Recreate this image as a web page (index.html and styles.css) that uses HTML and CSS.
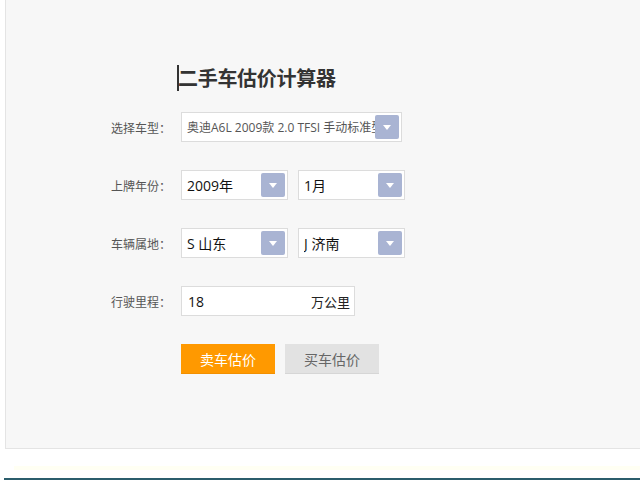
FILE: index.html
```html
<!DOCTYPE html>
<html lang="zh-CN">
<head>
<meta charset="utf-8">
<title>二手车估价计算器</title>
<link rel="stylesheet" href="styles.css">
</head>
<body>
<div class="panel">
  <h1 class="title">二手车估价计算器</h1>
  <div class="form">
    <div class="row">
      <label class="label">选择车型：</label>
      <div class="select wide small"><span class="val">奥迪A6L 2009款 2.0 TFSI 手动标准型</span><span class="arrow"></span></div>
    </div>
    <div class="row">
      <label class="label">上牌年份：</label>
      <div class="select"><span class="val">2009年</span><span class="arrow"></span></div>
      <div class="select"><span class="val">1月</span><span class="arrow"></span></div>
    </div>
    <div class="row">
      <label class="label">车辆属地：</label>
      <div class="select"><span class="val">S 山东</span><span class="arrow"></span></div>
      <div class="select"><span class="val">J 济南</span><span class="arrow"></span></div>
    </div>
    <div class="row">
      <label class="label">行驶里程：</label>
      <div class="input"><span class="val">18</span><span class="unit">万公里</span></div>
    </div>
    <div class="row btns">
      <button class="btn sell">卖车估价</button>
      <button class="btn buy">买车估价</button>
    </div>
  </div>
</div>
<div class="tint"></div>
<div class="footer-line"></div>
</body>
</html>
```
FILE: styles.css
```css
html, body {
  margin: 0;
  padding: 0;
  background: #ffffff;
  font-family: "Open Sans", "Noto Sans CJK SC", sans-serif;
}
.panel {
  margin-left: 5px;
  height: 449px;
  box-sizing: border-box;
  background: #f7f7f7;
  border-left: 1px solid #e4e4e4;
  border-bottom: 1px solid #e4e4e4;
  padding-top: 65px;
}
.title {
  margin: 0 0 0 171px;
  font-family: "Noto Sans CJK SC", sans-serif;
  font-size: 20px;
  font-weight: 700;
  line-height: 26px;
  color: #333;
  border-left: 2px solid #333;
  width: fit-content;
  height: 26px;
  text-indent: -1px;
  letter-spacing: -0.3px;
}
.form {
  margin-top: 21px;
  display: flex;
  flex-direction: column;
  gap: 28px;
}
.row {
  display: flex;
  align-items: center;
  height: 30px;
  gap: 10px;
}
.label {
  width: 66px;
  margin-left: 99px;
  text-align: right;
  font-family: "Noto Sans CJK SC", sans-serif;
  font-size: 12px;
  color: #555;
  white-space: nowrap;
}
.select, .input {
  box-sizing: border-box;
  height: 30px;
  background: #fff;
  border: 1px solid #dcdcdc;
  display: flex;
  align-items: center;
  padding: 0 2px 0 5px;
  font-size: 14px;
  color: #111;
  overflow: hidden;
  white-space: nowrap;
}
.select {
  width: 107px;
}
.select.wide {
  width: 221px;
}
.select.small .val {
  font-size: 12px;
  color: #555;
}
.val {
  flex: 1;
  overflow: hidden;
}
.arrow {
  flex: none;
  width: 24px;
  height: 24px;
  border-radius: 2px;
  background: #a9b4d3;
  position: relative;
}
.arrow::after {
  content: "";
  position: absolute;
  left: 8px;
  top: 10px;
  border-left: 4px solid transparent;
  border-right: 4px solid transparent;
  border-top: 5px solid #fff;
}
.input {
  width: 174px;
  padding: 0 4px 0 6px;
}
.unit {
  font-size: 13px;
  color: #222;
}
.btns {
  padding-left: 175px;
}
.btn {
  width: 94px;
  height: 30px;
  border: 0;
  padding: 0;
  font-family: "Noto Sans CJK SC", sans-serif;
  font-size: 14px;
  cursor: pointer;
}
.sell {
  background: #ff9900;
  color: #fff;
  border-bottom: 1px solid #f29000;
}
.buy {
  background: #e2e2e2;
  color: #666;
  border-bottom: 1px solid #d6d6d6;
}
.tint {
  margin-top: 17px;
  margin-left: 14px;
  height: 4px;
  background: #fffff3;
}
.footer-line {
  margin-top: 8px;
  margin-left: 4px;
  height: 2px;
  background: #2b5d6c;
}
```
